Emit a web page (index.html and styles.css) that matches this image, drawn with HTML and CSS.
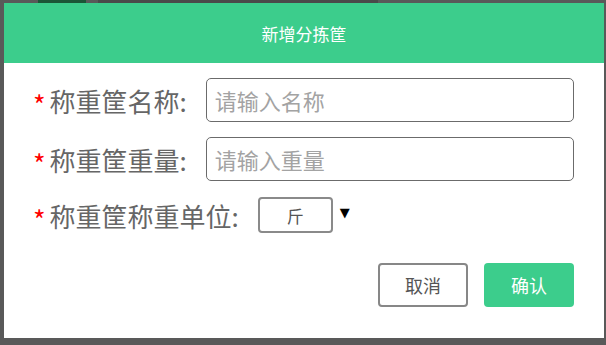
FILE: index.html
```html
<!DOCTYPE html>
<html lang="zh-CN">
<head>
  <meta charset="UTF-8">
  <meta name="viewport" content="width=device-width, initial-scale=1.0">
  <title>新增分拣筐</title>
  <link rel="stylesheet" href="styles.css">
</head>
<body>
  <div class="backdrop-strip">
    <div class="strip-tab"></div>
    <div class="strip-text"></div>
  </div>

  <div class="modal">
    <div class="modal-header">新增分拣筐</div>
    <div class="modal-body">
      <div class="form-row">
        <span class="required">*</span>
        <label class="form-label">称重筐名称:</label>
        <input type="text" class="form-input" placeholder="请输入名称">
      </div>
      <div class="form-row">
        <span class="required">*</span>
        <label class="form-label">称重筐重量:</label>
        <input type="text" class="form-input" placeholder="请输入重量">
      </div>
      <div class="form-row row-unit">
        <span class="required">*</span>
        <label class="form-label">称重筐称重单位:</label>
        <div class="unit-select">斤</div>
        <span class="unit-arrow">▼</span>
      </div>

      <div class="modal-footer">
        <button class="btn btn-cancel">取消</button>
        <button class="btn btn-ok">确认</button>
      </div>
    </div>
  </div>
</body>
</html>
```

FILE: styles.css
```css
body {
  margin: 0;
  background-color: #595959;
  font-family: 'Noto Sans CJK SC', 'Noto Sans', sans-serif;
}

.backdrop-strip {
  height: 3px;
  display: flex;
}

.strip-tab {
  width: 48px;
  margin-left: 38px;
  background-color: #1b5637;
}

.strip-text {
  width: 280px;
  margin-left: 12px;
  background-color: #4a4a4a;
}

.modal {
  width: 600px;
  height: 335px;
  margin-left: 4px;
  background-color: #fff;
  display: flex;
  flex-direction: column;
}

.modal-header {
  height: 60px;
  background-color: #3ccd8c;
  color: #fff;
  font-size: 17px;
  display: flex;
  justify-content: center;
  align-items: center;
}

.modal-body {
  padding: 15px 30px 0 29px;
}

.form-row {
  height: 44px;
  display: flex;
  align-items: center;
  margin-bottom: 15px;
}

.form-row.row-unit {
  margin-top: -3px;
  margin-bottom: 26px;
}

.required {
  color: #f00;
  font-size: 27px;
  line-height: 1;
  margin-right: 4px;
  padding-top: 8px;
}

.form-label {
  color: #666;
  font-size: 26px;
  margin-right: 19px;
  white-space: nowrap;
}

.form-input {
  flex: 1;
  height: 44px;
  box-sizing: border-box;
  border: 1px solid #6b6b6b;
  border-radius: 5px;
  padding: 0 8px;
  font-family: inherit;
  font-size: 22px;
  color: #333;
  outline: none;
}

.form-input::placeholder {
  color: #a3a3a3;
}

.unit-select {
  width: 75px;
  height: 36px;
  box-sizing: border-box;
  border: 2px solid #8a8a8a;
  border-radius: 4px;
  display: flex;
  justify-content: center;
  align-items: center;
  font-size: 17px;
  color: #555;
}

.unit-arrow {
  font-family: 'DejaVu Sans', sans-serif;
  font-size: 13px;
  color: #000;
  margin-left: 7px;
  margin-top: -6px;
}

.modal-footer {
  display: flex;
  justify-content: flex-end;
  gap: 16px;
}

.btn {
  width: 90px;
  height: 44px;
  box-sizing: border-box;
  font-family: inherit;
  font-size: 18px;
  border-radius: 4px;
  cursor: pointer;
}

.btn-cancel {
  background-color: #fff;
  border: 2px solid #878787;
  color: #555;
}

.btn-ok {
  background-color: #3ccd8c;
  border: none;
  color: #fff;
}
```
